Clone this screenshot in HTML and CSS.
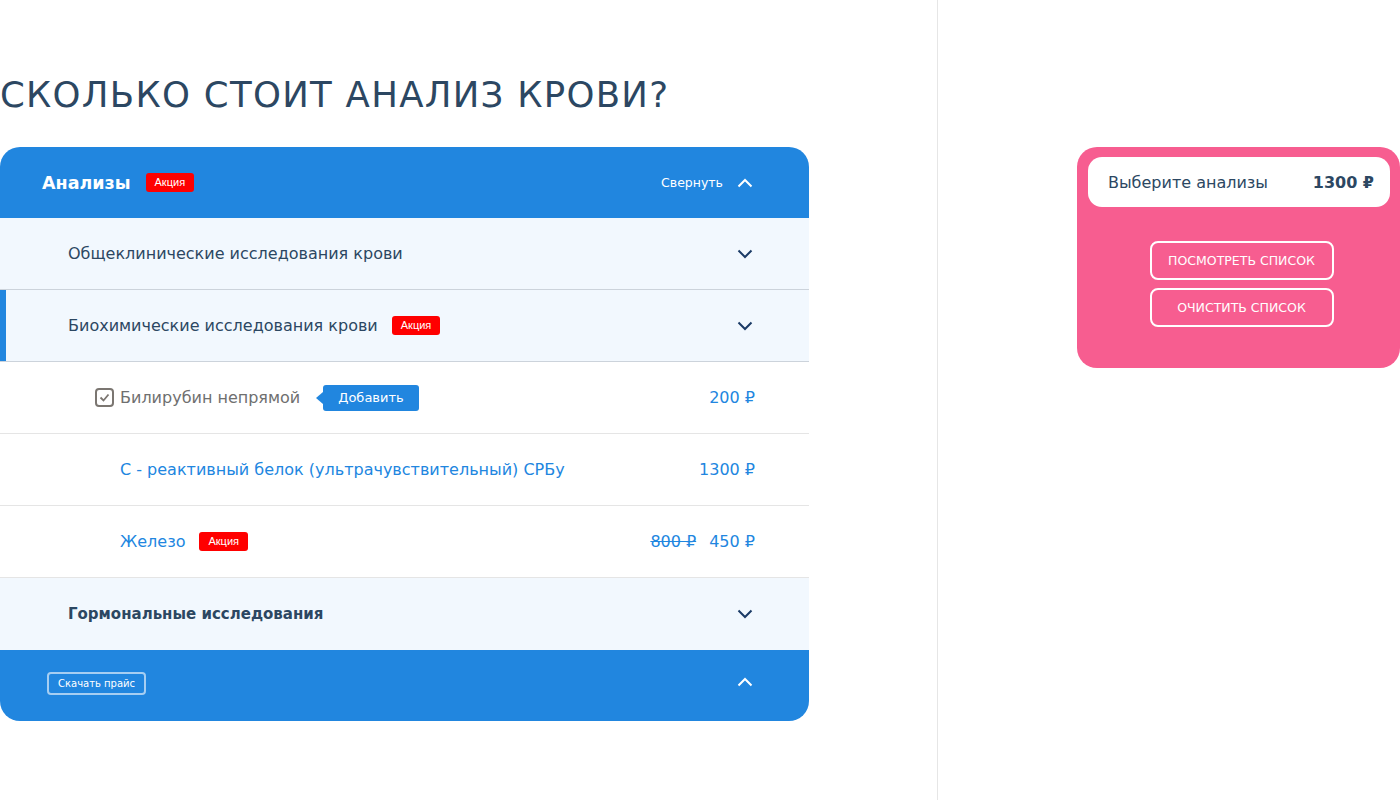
FILE: index.html
```html
<!DOCTYPE html>
<html lang="ru">
<head>
<meta charset="utf-8">
<link rel="stylesheet" href="styles.css">
</head>
<body>
<div class="page">
  <main class="main">
    <h1 class="title">СКОЛЬКО СТОИТ АНАЛИЗ КРОВИ?</h1>
    <section class="card">
      <header class="card-head">
        <div class="head-left">
          <span class="head-title">Анализы</span>
          <span class="badge">Акция</span>
        </div>
        <div class="head-right">
          <span class="collapse-text">Свернуть</span>
          <svg class="chev" width="16" height="10" viewBox="0 0 16 10"><polyline points="1.5,8.5 8,2 14.5,8.5" fill="none" stroke="#fff" stroke-width="2"/></svg>
        </div>
      </header>

      <div class="group">
        <span class="group-title">Общеклинические исследования крови</span>
        <svg class="chev" width="16" height="10" viewBox="0 0 16 10"><polyline points="1.5,1.5 8,8 14.5,1.5" fill="none" stroke="#1b3b66" stroke-width="2"/></svg>
      </div>

      <div class="group group-active">
        <div class="group-left">
          <span class="group-title">Биохимические исследования крови</span>
          <span class="badge">Акция</span>
        </div>
        <svg class="chev" width="16" height="10" viewBox="0 0 16 10"><polyline points="1.5,1.5 8,8 14.5,1.5" fill="none" stroke="#1b3b66" stroke-width="2"/></svg>
      </div>

      <div class="item">
        <div class="item-left item-checked">
          <svg class="check" width="19" height="19" viewBox="0 0 19 19"><rect x="1" y="1" width="17" height="17" rx="3" fill="none" stroke="#7b7671" stroke-width="2"/><polyline points="5.5,9.5 8.5,12.5 13.5,6.5" fill="none" stroke="#7b7671" stroke-width="1.8"/></svg>
          <span class="item-name gray">Билирубин непрямой</span>
          <span class="tooltip">Добавить</span>
        </div>
        <span class="price">200 ₽</span>
      </div>

      <div class="item">
        <div class="item-left">
          <span class="item-name">С - реактивный белок (ультрачувствительный) СРБу</span>
        </div>
        <span class="price">1300 ₽</span>
      </div>

      <div class="item">
        <div class="item-left">
          <span class="item-name">Железо</span>
          <span class="badge">Акция</span>
        </div>
        <div class="prices">
          <span class="price old">800 ₽</span>
          <span class="price">450 ₽</span>
        </div>
      </div>

      <div class="group group-last">
        <span class="group-title bold">Гормональные исследования</span>
        <svg class="chev" width="16" height="10" viewBox="0 0 16 10"><polyline points="1.5,1.5 8,8 14.5,1.5" fill="none" stroke="#1b3b66" stroke-width="2"/></svg>
      </div>

      <footer class="card-foot">
        <span class="download">Скачать прайс</span>
        <svg class="chev chev-foot" width="16" height="10" viewBox="0 0 16 10"><polyline points="1.5,8.5 8,2 14.5,8.5" fill="none" stroke="#fff" stroke-width="2"/></svg>
      </footer>
    </section>
  </main>
  <aside class="side">
    <div class="cart">
      <div class="cart-total">
        <span class="cart-label">Выберите анализы</span>
        <span class="cart-sum">1300 ₽</span>
      </div>
      <div class="cart-buttons">
        <span class="cart-btn">ПОСМОТРЕТЬ СПИСОК</span>
        <span class="cart-btn">ОЧИСТИТЬ СПИСОК</span>
      </div>
    </div>
  </aside>
</div>
</body>
</html>
```
FILE: styles.css
```css
* { box-sizing: border-box; }
html, body { margin: 0; padding: 0; }
body {
  font-family: "DejaVu Sans", "Noto Sans", sans-serif;
  background: #fff;
  color: #2c4762;
  width: 1400px;
  height: 800px;
  overflow: hidden;
}
.page {
  display: grid;
  grid-template-columns: 937px 1fr;
  height: 800px;
}
.main {
  width: 809px;
}
.side {
  border-left: 1px solid #e6e6e6;
  padding-top: 147px;
  display: flex;
  justify-content: flex-end;
}

.title {
  margin: 74px 0 31px;
  font-size: 35.5px;
  line-height: 42px;
  font-weight: 400;
  letter-spacing: 1.3px;
  color: #2c4762;
  white-space: nowrap;
}

.card {
  border-radius: 20px;
  overflow: hidden;
}
.card-head {
  height: 71px;
  background: #2186df;
  display: flex;
  align-items: center;
  justify-content: space-between;
  padding: 0 56px 0 42px;
  color: #fff;
}
.head-left, .group-left, .item-left { display: flex; align-items: center; }
.head-title {
  font-size: 17.5px;
  font-weight: 700;
  margin-right: 15px;
}
.badge {
  display: inline-block;
  background: #ff0000;
  color: #fff;
  font-size: 11px;
  line-height: 19px;
  height: 19px;
  padding: 0 9px;
  border-radius: 3px;
  font-family: "Liberation Sans", "Noto Sans", sans-serif;
}
.head-right { display: flex; align-items: center; }
.collapse-text { font-size: 12.5px; margin-right: 14px; }
.chev { display: block; }

.group {
  height: 72px;
  background: #f2f8fe;
  display: flex;
  align-items: center;
  justify-content: space-between;
  padding: 0 56px 0 68px;
  border-bottom: 1px solid #ccd3db;
}
.group-active { box-shadow: inset 6px 0 0 #2186df; }
.group-last { border-bottom: none; height: 72px; }
.group-title { font-size: 16px; color: #2c4762; margin-right: 14px; }
.group-title.bold { font-weight: 700; font-size: 15px; }

.item {
  height: 72px;
  background: #fff;
  display: flex;
  align-items: center;
  justify-content: space-between;
  padding: 0 54px 0 120px;
  border-bottom: 1px solid #e5e5e5;
}
.item-checked { margin-left: -25px; }
.check { margin-right: 6px; }
.item-name { font-size: 16px; color: #2186df; margin-right: 14px; }
.item-name.gray { color: #6f6f6f; margin-right: 23px; }
.tooltip {
  position: relative;
  background: #2186df;
  color: #fff;
  font-size: 13px;
  height: 26px;
  line-height: 26px;
  padding: 0 15px;
  border-radius: 3px;
}
.tooltip::before {
  content: "";
  position: absolute;
  left: -7px;
  top: 7px;
  border-top: 6px solid transparent;
  border-bottom: 6px solid transparent;
  border-right: 7px solid #2186df;
}
.prices { display: flex; gap: 13px; }
.price { font-size: 16px; color: #2186df; }
.price.old { text-decoration: line-through; }

.card-foot {
  height: 71px;
  background: #2186df;
  display: flex;
  align-items: center;
  justify-content: space-between;
  padding: 0 56px 4px 47px;
}
.chev-foot { margin-bottom: 4px; }
.download {
  color: #fff;
  font-size: 10px;
  height: 23px;
  line-height: 19px;
  padding: 0 9px;
  border: 2px solid rgba(255,255,255,0.6);
  border-radius: 4px;
}

.cart {
  width: 323px;
  height: 221px;
  background: #f75d90;
  border-radius: 20px;
  padding: 10px 10px 0 11px;
}
.cart-total {
  height: 50px;
  background: #fff;
  border-radius: 14px;
  display: flex;
  align-items: center;
  justify-content: space-between;
  padding: 0 16px 0 20px;
}
.cart-label { font-size: 16px; color: #2c4762; }
.cart-sum { font-size: 16px; font-weight: 700; color: #2c4762; }
.cart-buttons {
  display: flex;
  flex-direction: column;
  align-items: center;
  gap: 8px;
  margin-top: 34px;
  padding-left: 5px;
}
.cart-btn {
  width: 184px;
  height: 39px;
  border: 2px solid #fff;
  border-radius: 8px;
  color: #fff;
  font-size: 12.5px;
  display: flex;
  align-items: center;
  justify-content: center;
}
```
